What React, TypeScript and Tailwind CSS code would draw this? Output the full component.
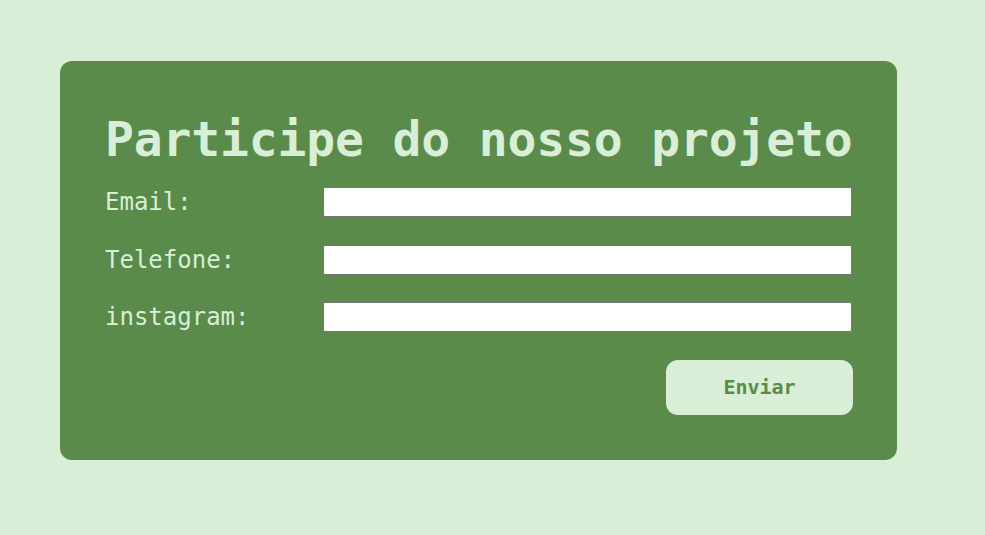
export default function App() {
  const fields = [
    { label: 'Email:', type: 'email' },
    { label: 'Telefone:', type: 'tel' },
    { label: 'instagram:', type: 'text' },
  ]

  return (
    <div className="min-h-[535px] w-full bg-[#d8eed6] pt-[61px] pl-[60px] font-['DejaVu_Sans_Mono',monospace]">
      <div className="flex w-[837px] flex-col rounded-[12px] bg-[#5a8b4a] px-[45px] pt-[50px] pb-[45px]">
        <h1 className="whitespace-nowrap text-[48px] leading-[56px] font-bold tracking-[-0.15px] text-[#d8eed6]">
          Participe do nosso projeto
        </h1>

        <form className="mt-[20px] flex flex-col gap-[27.5px]" onSubmit={(e) => e.preventDefault()}>
          {fields.map((f) => (
            <div key={f.label} className="grid grid-cols-[218px_1fr] items-center">
              <label className="text-[24px] leading-[30px] text-[#d8eed6]">{f.label}</label>
              <input
                type={f.type}
                className="h-[30px] w-full rounded-[2px] border border-[#767676] bg-white px-1 outline-none"
              />
            </div>
          ))}

          <div className="flex justify-end">
            <button
              type="submit"
              className="mr-[-1px] h-[55px] w-[187px] rounded-[12px] bg-[#d8eed6] text-[20px] font-bold text-[#5a8b4a]"
            >
              Enviar
            </button>
          </div>
        </form>
      </div>
    </div>
  )
}
